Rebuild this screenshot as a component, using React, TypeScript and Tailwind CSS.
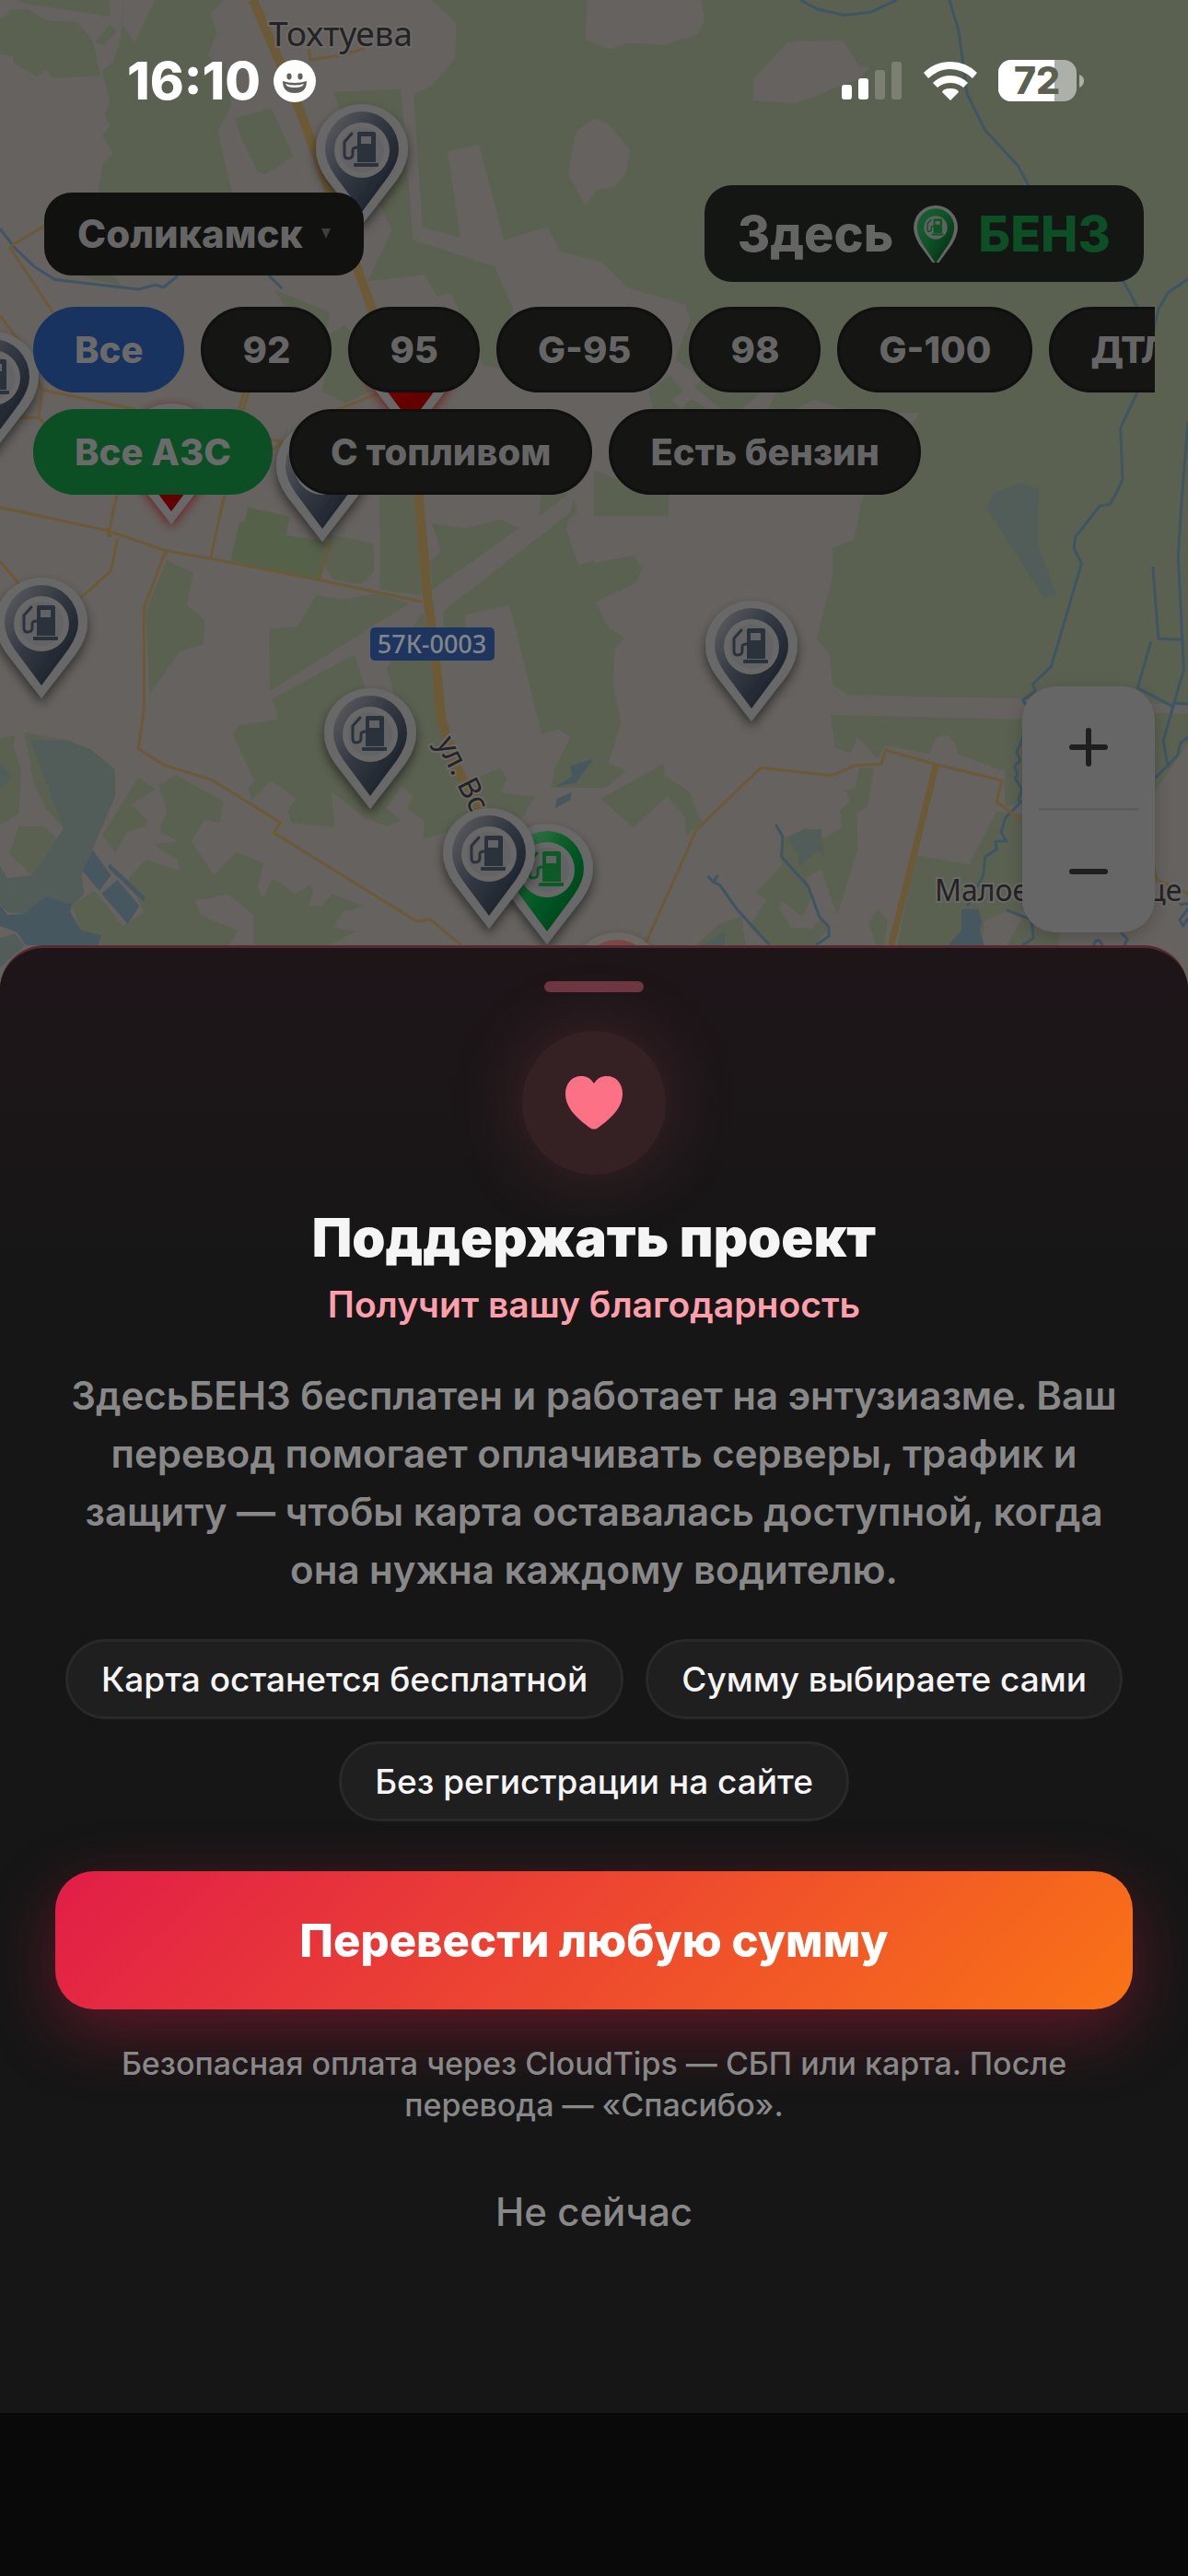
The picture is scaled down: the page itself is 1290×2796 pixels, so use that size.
import React from "react";

const LAND = "#65625f";
const FOREST = "#5b6151";
const ROAD = "#6c5a37";
const RIVER = "#3e5564";
const LAKE = "#46575f";
const LAND_LABEL = "#232323";

type Tile = {
  place: string;
  base?: string;
  forest: string[];
  land?: string[];
  park?: string[];
  marsh?: string[];
  lake?: string[];
  minorRoads: string[];
  mainRoads: { points: string; width: number }[];
  rivers: string[];
};

const tiles: Tile[] = [
  {
    place: "scale(0.41135 0.35714)",
    forest: [
      "0,60 30,30 75,28 120,62 205,68 245,125 265,230 140,238 120,210 100,235 35,190 35,170 0,165",
      "250,130 290,75 308,95 275,135",
      "50,0 290,0 290,50 120,20 50,6",
      "325,0 320,70 355,130 410,0 590,0 555,40 572,100 548,170 600,215 610,320 575,400 612,585 260,585 270,500 298,465 270,410 292,380 275,350 290,310 270,215 300,190 320,110",
      "620,360 715,328 775,475 700,530 680,520 640,430",
      "1140,0 1205,70 1200,180 1140,260 1092,290 1115,690 1215,722 1182,460 1265,440 1330,730 1445,690 1480,765 1568,790 1568,590 1545,625 1500,530 1520,400 1568,360 1568,130 1545,120 1550,0",
      "880,280 1058,270 1090,730 1305,810 1355,940 1330,1005 1320,1120 1275,1110 1250,1040 1190,890 1155,900 1120,835 970,855 1035,700 960,520",
      "725,880 870,950 860,1020 910,990 960,1050 975,1190 915,1225 850,1190 860,1130 820,1060",
      "1430,1500 1500,1500 1425,1568",
      "210,838 300,838 320,868 250,850",
      "1002,1500 1092,1500 1098,1568 1002,1568",
    ],
    minorRoads: [
      "25,750 120,685",
      "25,750 140,950",
      "0,960 60,1050 112,1185 355,1243",
      "112,1185 102,1270 150,1330",
      "0,1268 102,1270",
      "657,1190 640,1250",
      "645,1190 630,1250",
      "1000,1195 890,1245",
      "700,1330 748,1345 720,1365",
      "310,1500 295,1568",
      "595,1500 580,1568",
      "0,1543 110,1568",
      "815,150 820,182 900,168 962,148",
    ],
    mainRoads: [{ points: "668,0 780,300 870,580 985,950 1090,1260 1108,1568", width: 10 }],
    rivers: ["0,695 40,755 90,810 145,850 365,879 410,866 432,873 470,838", "710,838 745,877"],
  },
  {
    place: "translate(645 0) scale(0.41135 0.35714)",
    base: FOREST,
    forest: [],
    land: [
      "0,0 282,0 292,60 275,105 185,137 90,130 40,150 0,132",
      "420,240 512,127 655,122 700,200 728,205 700,240 530,315 420,305",
      "0,362 35,374 95,455 85,525 55,567 10,577 0,590",
      "0,790 20,795 90,875 240,925 255,970 215,1090 285,1155 265,1175 335,1243 310,1250 255,1212 232,1243 205,1215 235,1190 200,1140 145,1190 155,1243 0,1360",
      "0,1190 145,1190 155,1243 860,1255 712,1500 700,1568 195,1568 198,1500 160,1500 0,1430",
      "385,1245 430,1205 440,1190 480,1190 460,1245",
      "530,1245 580,1215 665,1245",
    ],
    marsh: ["1037,1540 1055,1500 1125,1467 1175,1487 1175,1568 1045,1568"],
    minorRoads: [],
    mainRoads: [],
    rivers: [
      "545,0 590,28 660,46 730,37 800,0",
      "938,0 962,90 985,285 1032,395 1120,505 1150,570 1398,855 1435,935 1460,1000",
      "1568,848 1515,890 1490,940 1480,990 1435,1190 1390,1300 1395,1458 1365,1533 1335,1536 1310,1568",
      "1568,1280 1548,1568",
    ],
  },
  {
    place: "translate(0 540) scale(0.41135 0.33333)",
    forest: [
      "870,120 985,150 987,240 955,282 880,268 855,220",
      "440,205 510,245 493,350 540,398 537,478 475,500 395,640 385,370",
      "1003,0 1095,0 1115,318 1003,300",
      "1140,85 1230,100 1320,72 1370,100 1140,300 1135,210 1165,175",
      "1428,0 1480,0 1425,60",
      "710,430 785,420 835,318 900,332 1000,312 1080,345 712,630",
      "720,655 935,512 975,660 1040,640 1022,555 1125,500 1150,500 1180,780 1200,900 1220,930 1320,882 1338,915 1320,962 1412,975 1380,1040 1280,1060 1118,1110 1120,1050 1075,1015 1090,975 1060,940 1020,1010 1058,1052 1020,1070 960,1040 895,975 875,960 882,1075 770,1058 760,1020 782,980 715,922 665,985 655,945 672,925 615,770 632,742 735,722",
      "1022,555 1115,375 1150,500",
      "1170,370 1505,50 1495,105 1528,220 1568,205 1568,745 1505,780 1475,755 1430,770 1345,350 1228,382 1228,440 1170,430",
      "1515,5 1525,50 1500,70",
      "1505,780 1568,745 1568,945 1455,945 1465,880",
      "0,785 40,775 35,815 55,880 50,1030 0,1065",
      "65,765 180,790 200,1000 168,1078 120,1010 90,930",
      "50,1070 115,1072 150,1110 85,1230 25,1160",
      "365,912 410,950 345,1000 390,1050 385,1070 335,1090 305,1155 270,1100",
      "465,905 590,990 580,1060 540,1050 505,1120 565,1230 625,1155 695,1190 680,1270 695,1305 720,1240 780,1290 820,1262 825,1285 815,1330 850,1330 875,1292 960,1330 905,1350 880,1400 940,1412 870,1458 670,1458 670,1360 600,1290 560,1305 515,1310 530,1360 628,1410 605,1458 340,1458 320,1400 380,1350 340,1240 385,1180 475,1215 470,1180 405,1130 470,1120 420,1085 440,1020 420,935",
      "190,1330 250,1280 320,1390 340,1458 265,1458 268,1425 215,1410",
    ],
    park: ["655,32 765,62 755,122 865,145 840,270 610,205 632,80 645,80"],
    marsh: [
      "80,790 180,792 240,820 303,885 305,970 215,1230 222,1290 190,1330 120,1300 65,1355 20,1350 20,1240 85,1230 168,1078",
      "0,860 30,910 0,950",
      "0,1200 20,1240 20,1350 0,1325",
      "0,1435 40,1420 65,1460 0,1530",
    ],
    lake: [
      "0,1325 20,1360 65,1355 120,1300 190,1325 185,1350 215,1410 268,1425 260,1458 68,1458 45,1415 0,1395",
      "245,1148 293,1230 262,1280 217,1215",
      "310,1245 368,1330 337,1388 268,1290",
      "290,1192 383,1300 380,1318 285,1205",
      "1505,875 1568,850 1520,930 1465,942 1510,910",
      "1470,980 1510,960 1505,985 1465,1012",
    ],
    minorRoads: [
      "0,32 285,108 435,172 560,200 840,268 1115,340",
      "307,0 290,100",
      "310,135 293,238 210,330",
      "590,0 557,195",
      "875,130 842,268",
      "437,175 380,360 380,690 365,818 435,872 560,920 740,1058 723,1092 1100,1380 1135,1373 1220,1460",
      "0,208 50,280",
    ],
    mainRoads: [
      { points: "1106,0 1128,320 1148,500 1165,720 1205,880 1270,1020", width: 10 },
      { points: "285,98 290,128", width: 5 },
      { points: "436,170 437,190", width: 4 },
    ],
    rivers: [],
  },
  {
    place: "translate(645 540) scale(0.41135 0.33333)",
    forest: [
      "162,0 198,0 193,65",
      "710,0 1568,0 1568,675 1130,655 670,642 630,610 622,510 587,460 630,260 630,165 685,138",
      "0,212 105,190 127,230 110,278 5,340 35,420 80,457 55,490 50,610 72,735 38,865 85,890 30,945 0,945",
      "185,865 185,905 250,955 285,1060 243,1100 240,1040 195,972 103,1075 18,980 130,905",
      "625,708 1130,722 1130,1000 1085,1005 1083,890 960,835 955,800 935,775 905,780 885,835 770,808 748,850 695,780 678,832 638,815",
      "700,880 740,880 722,1005 693,1030 697,1140 642,1362 600,1210 560,1240 575,1300 550,1365 495,1310 490,1340 520,1400 575,1405 600,1370 620,1400 580,1458 460,1458 410,1400 455,1310 428,1285 495,1200 500,1110 560,1075 605,1110 655,1075 650,1020 678,985 662,955 690,945",
      "270,1458 330,1390 390,1365 400,1458",
      "725,1385 750,1340 775,1380 765,1458 745,1458",
      "850,1165 990,1195 1063,1022 1130,1030 1130,1370 1230,1415 1225,1458 800,1458",
      "1480,702 1568,705 1568,800 1480,960",
    ],
    land: ["1090,1345 1130,1370 1090,1458 1025,1458 1030,1380"],
    marsh: [
      "1050,0 1173,0 1173,155 1220,318 1187,327 1035,30",
      "510,1110 555,1080 600,1080 600,1110 610,1170 590,1150 540,1205 540,1160",
      "285,1458 345,1412 345,1458",
    ],
    lake: ["970,1340 1015,1340 1025,1385 1018,1410 1030,1458 935,1458 970,1410"],
    minorRoads: [
      "137,1450 270,1083 440,880 628,905 690,872 758,868 770,822 905,870 1077,922 1063,990 1115,1040 1135,1050",
      "1478,1200 1485,1245 1568,1290",
    ],
    mainRoads: [{ points: "903,870 785,1458", width: 7 }],
    rivers: [
      "1372,0 1362,22 1335,27 1270,130 1267,165 1287,215 1207,550 1158,608 1165,630 1132,660 1150,690 1130,790 1115,830 1125,855 1110,875 1118,900 1112,915 1130,950 1120,985 1128,990 1085,1045 1075,1090 1088,1118 1060,1120 1063,1145 1032,1170 1028,1230 985,1330",
      "1552,0 1542,190 1557,560 1503,790 1515,880",
      "1475,225 1490,460 1552,462",
      "1470,470 1435,620 1530,682",
      "1528,670 1568,672",
      "1568,780 1548,800 1540,840 1480,915",
      "480,1065 498,1105 495,1170 565,1265 595,1365 620,1398 620,1428 585,1458",
      "300,1232 315,1252 327,1230",
      "315,1252 332,1262 380,1345 462,1455",
      "1088,1343 1155,1375 1160,1435 1130,1458",
      "1390,1415 1408,1438 1400,1458",
      "1318,1458 1325,1443 1335,1443 1342,1458",
      "1568,1322 1545,1325",
      "1568,1340 1546,1375 1555,1395 1568,1370",
    ],
  },
];

function polylinePath(points: string) {
  return "M" + points.split(" ").join("L");
}

function MapTile({ tile }: { tile: Tile }) {
  const shapes = (list: string[] | undefined, fill: string) =>
    (list ?? []).map((points) => <polygon key={points} points={points} fill={fill} />);
  const lines = (list: string[], stroke: string, width: number) =>
    list.map((points) => (
      <path
        key={points}
        d={polylinePath(points)}
        fill="none"
        stroke={stroke}
        strokeWidth={width}
        strokeLinejoin="round"
        vectorEffect="non-scaling-stroke"
      />
    ));
  return (
    <g transform={tile.place}>
      {tile.base && <rect width="1568" height="1568" fill={tile.base} />}
      {shapes(tile.forest, FOREST)}
      {shapes(tile.land, LAND)}
      {shapes(tile.park, "#56614a")}
      {shapes(tile.marsh, "#525d5a")}
      {shapes(tile.lake, LAKE)}
      {lines(tile.rivers, RIVER, 3)}
      {lines(tile.minorRoads, ROAD, 3)}
      {tile.mainRoads.map((road) => (
        <React.Fragment key={road.points}>{lines([road.points], ROAD, road.width)}</React.Fragment>
      ))}
    </g>
  );
}

type PinTone = "slate" | "green" | "red" | "pale";

const pins: { x: number; y: number; tone: PinTone }[] = [
  { x: 342, y: 112, tone: "slate" },
  { x: -59, y: 359, tone: "slate" },
  { x: 395, y: 341, tone: "red" },
  { x: 135, y: 437, tone: "red" },
  { x: 299, y: 456, tone: "slate" },
  { x: -6, y: 626, tone: "slate" },
  { x: 351, y: 746, tone: "slate" },
  { x: 765, y: 651, tone: "slate" },
  { x: 543, y: 893, tone: "green" },
  { x: 480, y: 876, tone: "slate" },
  { x: 619, y: 1011, tone: "pale" },
];

const pinInk: Record<PinTone, string> = {
  slate: "#2c313b",
  green: "#0a5a26",
  red: "#6d0000",
  pale: "#7a4343",
};

function FuelPump({ color }: { color: string }) {
  return (
    <g>
      <path
        fill={color}
        fillRule="evenodd"
        d="M48 31h16a2 2 0 0 1 2 2v31H46V33a2 2 0 0 1 2-2ZM50 36v8h11V36Z"
      />
      <rect x="42" y="65" width="27" height="4" rx="1" fill={color} />
      <path
        d="M40 33 32 42V56Q32 60 36 60Q41 60 41 55V51Q41 48 46 48"
        fill="none"
        stroke={color}
        strokeWidth="3"
        strokeLinecap="round"
      />
    </g>
  );
}

function PinBody({ tone }: { tone: PinTone }) {
  return (
    <>
      <path
        d="M51 132 13 83Q1 66 1 49A50 48 0 0 1 101 49Q101 66 89 83Z"
        fill={tone === "pale" ? "#6c6764" : "#676767"}
      />
      <path d="M51 118 22 79Q11 63 11 50A40 41 0 0 1 91 50Q91 63 80 79Z" fill={`url(#pin-${tone})`} />
      <circle cx="51" cy="51" r="30" fill="#686868" />
      <circle cx="51" cy="51" r="24" fill="#636365" />
      <FuelPump color={pinInk[tone]} />
    </>
  );
}

function PinGradient({ tone, from, mid, to }: { tone: string; from: string; mid: string; to: string }) {
  return (
    <linearGradient id={`pin-${tone}`} x1="0.1" y1="0.1" x2="0.8" y2="0.75">
      <stop offset="0" stopColor={from} />
      <stop offset="0.5" stopColor={mid} />
      <stop offset="1" stopColor={to} />
    </linearGradient>
  );
}

function CityMap() {
  const halo = { paintOrder: "stroke", stroke: "#6b6967", strokeWidth: 4 } as const;
  return (
    <svg
      className="absolute inset-0 h-full w-full"
      viewBox="0 0 1290 1074"
      preserveAspectRatio="xMidYMin slice"
      role="img"
      aria-label="Карта АЗС"
    >
      <defs>
        <PinGradient tone="slate" from="#56575b" mid="#343943" to="#20252e" />
        <PinGradient tone="green" from="#3f7350" mid="#075e27" to="#04491d" />
        <PinGradient tone="red" from="#7c1a1a" mid="#6d0000" to="#5e0000" />
        <PinGradient tone="pale" from="#804a4a" mid="#7a4343" to="#6d3a3a" />
        <filter id="pin-shadow" x="-30%" y="-20%" width="160%" height="150%">
          <feDropShadow dx="0" dy="6" stdDeviation="6" floodColor="#000" floodOpacity="0.5" />
        </filter>
        <filter id="pin-glow" x="-30%" y="-20%" width="160%" height="150%">
          <feDropShadow dx="0" dy="3" stdDeviation="6" floodColor="#6d0000" floodOpacity="0.7" />
        </filter>
      </defs>
      <rect width="1290" height="1074" fill={LAND} />
      {tiles.map((tile) => (
        <MapTile key={tile.place} tile={tile} />
      ))}
      <g fontFamily="'Noto Sans', sans-serif" fill={LAND_LABEL}>
        <text x="292" y="50" fontSize="37" {...halo}>
          Тохтуева
        </text>
        <text x="1015" y="978" fontSize="32" {...halo}>
          Малое Городище
        </text>
        <text transform="translate(473 806) rotate(63)" fontSize="32" {...halo}>
          ул. Вс
        </text>
        <rect x="402" y="681" width="135" height="36" rx="5" fill="#1e365f" />
        <text x="469" y="709" fontSize="27" fontWeight="500" textAnchor="middle" fill="#838587">
          57К-0003
        </text>
      </g>
      {pins.map((pin) => (
        <g
          key={`${pin.x}-${pin.y}`}
          transform={`translate(${pin.x} ${pin.y})`}
          filter={pin.tone === "red" ? "url(#pin-glow)" : "url(#pin-shadow)"}
        >
          <PinBody tone={pin.tone} />
        </g>
      ))}
    </svg>
  );
}

function StatusBar() {
  return (
    <div className="flex h-12 items-center justify-between pr-[114px] pl-[138px] text-white">
      <div className="flex items-center gap-[14px]">
        <time className="text-[56px] leading-none font-extrabold">16:10</time>
        <svg className="size-[46px]" viewBox="0 0 46 46" aria-hidden="true">
          <circle cx="23" cy="23" r="23" fill="#fff" />
          <ellipse cx="17" cy="18" rx="2.6" ry="3.4" fill="#62605c" />
          <ellipse cx="29" cy="18" rx="2.6" ry="3.4" fill="#62605c" />
          <path d="M10 23Q23 27 36 23Q36 36 23 36Q10 36 10 23Z" fill="#62605c" />
          <path d="M13 26Q23 29 33 26Q32 30 23 30Q14 30 13 26Z" fill="#fff" />
        </svg>
      </div>
      <div className="flex items-center gap-[23px]">
        <svg className="h-[42px] w-[66px]" viewBox="0 0 66 42" fill="#fff" aria-label="Сигнал сети">
          <rect x="0" y="25" width="11" height="16" rx="3" />
          <rect x="18" y="18" width="11" height="23" rx="3" />
          <rect x="36" y="9" width="11" height="32" rx="3" opacity="0.2" />
          <rect x="54" y="0" width="11" height="41" rx="3" opacity="0.2" />
        </svg>
        <svg className="h-[42px] w-[58px]" viewBox="0 0 58 42" fill="#fff" aria-label="Wi-Fi">
          <path d="M29 42 20 33Q21 29 29 29Q37 29 38 33Z" />
          <path d="M10 23Q18 15 29 15Q40 15 48 23L43 28Q37 23 29 23Q21 23 15 28Z" />
          <path d="M0 12Q12 0 29 0Q46 0 58 12L53 18Q42 8 29 8Q16 8 5 18Z" />
        </svg>
        <svg className="h-[46px] w-[92px] overflow-visible" viewBox="0 0 92 46" aria-label="Заряд 72%">
          <defs>
            <clipPath id="battery-shape">
              <rect width="85" height="45" rx="14" />
            </clipPath>
          </defs>
          <g clipPath="url(#battery-shape)">
            <rect width="85" height="45" fill="#adb0a8" />
            <rect width="61" height="45" fill="#fff" />
          </g>
          <path d="M88 16Q93 18 93 22.500Q93 28 88 30Z" fill="#adb0a8" />
          <text
            x="42"
            y="37"
            fontSize="41"
            fontWeight="800"
            textAnchor="middle"
            fill={FOREST}
            fontFamily="Inter, sans-serif"
          >
            72
          </text>
        </svg>
      </div>
    </div>
  );
}

type ChipTone = "dark" | "blue" | "green";

const chipTones: Record<ChipTone, string> = {
  dark: "border-[#101010] bg-[#151514] text-[#656565]",
  blue: "border-[#18335f] bg-[#18335f] text-[#6a6a6a]",
  green: "border-[#0d4f24] bg-[#0d4f24] text-[#6a6a6a]",
};

function Chip({ label, tone = "dark" }: { label: string; tone?: ChipTone }) {
  return (
    <button
      className={`h-[93px] shrink-0 rounded-full border-[3px] px-[42px] text-[40px] leading-none font-extrabold whitespace-nowrap ${chipTones[tone]}`}
    >
      {label}
    </button>
  );
}

function TopBar() {
  return (
    <header className="flex items-center justify-between px-12">
      <button className="flex h-[90px] items-center gap-5 rounded-[30px] bg-[#11110f] px-9 text-[42px] leading-none font-extrabold text-[#656565]">
        Соликамск
        <svg className="h-[11px] w-[10px]" viewBox="0 0 10 11" aria-hidden="true">
          <path d="M0 0H10L5 11Z" fill="#3e3e3e" />
        </svg>
      </button>
      <a
        href="#home"
        className="flex h-[105px] items-center gap-[22px] rounded-[30px] bg-[#141613] px-9 text-[54px] leading-none font-extrabold text-[#656565]"
      >
        Здесь
        <svg className="h-[62px] w-12" viewBox="0 0 102 132" aria-hidden="true">
          <defs>
            <PinGradient tone="brand" from="#1a5c31" mid="#0f5427" to="#06381a" />
          </defs>
          <path d="M51 142 13 90Q0 68 0 51A51 51 0 0 1 102 51Q102 68 89 90Z" fill="#666" />
          <path d="M51 134 20 88Q8 66 8 51A43 44 0 0 1 94 51Q94 66 82 88Z" fill="url(#pin-brand)" />
          <circle cx="51" cy="51" r="27" fill="#5f6360" />
          <FuelPump color="#0f5427" />
        </svg>
        <span className="text-[#0d4f24]">БЕНЗ</span>
      </a>
    </header>
  );
}

function ZoomControl() {
  return (
    <div className="absolute right-9 bottom-[62px] flex w-36 flex-col rounded-[36px] bg-[#666] shadow-[0_6px_18px_rgba(0,0,0,0.2)]">
      <button className="flex h-[132px] items-center justify-center" aria-label="Приблизить">
        <svg className="size-[42px]" viewBox="0 0 42 42" stroke="#1f1f1f" strokeWidth="6" strokeLinecap="round">
          <path d="M3 21H39M21 3V39" />
        </svg>
      </button>
      <div className="mx-[18px] h-[3px] bg-[#5c5c5c]" />
      <button className="flex h-[132px] items-center justify-center" aria-label="Отдалить">
        <svg className="size-[42px]" viewBox="0 0 42 42" stroke="#1f1f1f" strokeWidth="6" strokeLinecap="round">
          <path d="M3 21H39" />
        </svg>
      </button>
    </div>
  );
}

const perks = ["Карта останется бесплатной", "Сумму выбираете сами", "Без регистрации на сайте"];

function SupportSheet() {
  return (
    <section
      role="dialog"
      aria-labelledby="support-title"
      className="relative -mt-12 flex flex-col items-center rounded-t-[48px] border-t-[3px] border-[#532b30] bg-[#161616] bg-[linear-gradient(#1e1519,#161616_380px)] px-[60px] pt-9 pb-[164px] text-center"
    >
      <div className="h-3 w-[108px] rounded-full bg-[#6c3640]" />
      <div className="mt-[42px] flex size-[156px] items-center justify-center rounded-full bg-[#352024] shadow-[0_0_84px_rgba(251,113,133,0.18)]">
        <svg className="h-[58px] w-[62px]" viewBox="0 0 62 58" aria-hidden="true">
          <path
            d="M31 8C27 2 23 0 17 0C7 0 0 8 0 19C0 34 12 46 28 57Q31 58 34 57C50 46 62 34 62 19C62 8 55 0 45 0C39 0 35 2 31 8Z"
            fill="#fd7186"
          />
        </svg>
      </div>
      <h1 id="support-title" className="mt-8 text-[58px] leading-[72px] font-black text-[#f5f5f5]">
        Поддержать проект
      </h1>
      <p className="mt-[10px] text-[39px] leading-[54px] font-semibold text-[#ff9fab]">Получит вашу благодарность</p>
      <p className="mt-10 text-[42px] leading-[63px] font-semibold text-[#888]">
        ЗдесьБЕНЗ бесплатен и работает на энтузиазме. Ваш перевод помогает оплачивать серверы, трафик и защиту — чтобы
        карта оставалась доступной, когда она нужна каждому водителю.
      </p>
      <ul className="mt-11 flex flex-wrap justify-center gap-6">
        {perks.map((perk) => (
          <li
            key={perk}
            className="flex h-[87px] items-center rounded-full border-[3px] border-[#292929] bg-[#1f1f1f] px-9 text-[37px] leading-none font-medium text-[#f5f5f5]"
          >
            {perk}
          </li>
        ))}
      </ul>
      <button className="mt-[54px] h-[150px] w-full rounded-[42px] bg-[linear-gradient(135deg,#e11d48,#f97316)] text-[49px] leading-none font-extrabold text-white shadow-[0_24px_72px_rgba(225,29,72,0.35)]">
        Перевести любую сумму
      </button>
      <p className="relative mt-9 px-3 text-[34px] leading-[45px] font-medium text-[#888]">
        Безопасная оплата через CloudTips — СБП или карта. После перевода — «Спасибо».
      </p>
      <button className="mt-10 h-[108px] px-12 text-[42px] leading-none font-medium text-[#888]">Не сейчас</button>
    </section>
  );
}

export default function App() {
  return (
    <main className="flex min-h-screen flex-col overflow-x-hidden bg-[#090909] font-[Inter,'Noto_Sans',sans-serif]">
      <div className="relative min-h-[700px] grow overflow-hidden">
        <CityMap />
        <div className="relative pt-16">
          <StatusBar />
          <div className="mt-[89px]">
            <TopBar />
          </div>
          <nav aria-label="Фильтры" className="mx-9 mt-[27px] flex flex-col gap-[18px]">
            <div className="flex gap-[18px] overflow-hidden">
              <Chip label="Все" tone="blue" />
              <Chip label="92" />
              <Chip label="95" />
              <Chip label="G-95" />
              <Chip label="98" />
              <Chip label="G-100" />
              <Chip label="ДТЛ" />
            </div>
            <div className="flex gap-[18px] overflow-hidden">
              <Chip label="Все АЗС" tone="green" />
              <Chip label="С топливом" />
              <Chip label="Есть бензин" />
            </div>
          </nav>
        </div>
        <ZoomControl />
      </div>
      <SupportSheet />
      <div className="h-[177px] shrink-0" />
    </main>
  );
}
